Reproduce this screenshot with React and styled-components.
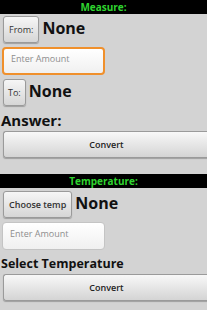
import React from "react";
import styled, { createGlobalStyle } from "styled-components";

const Global = createGlobalStyle`
  html, body {
    margin: 0;
    padding: 0;
    background: #d3d3d3;
    font-family: "Open Sans", "DejaVu Sans", sans-serif;
  }
`;

const Screen = styled.div`
  width: 207px;
  height: 310px;
  overflow: hidden;
  background: #d3d3d3;
  display: flex;
  flex-direction: column;
`;

const TitleBar = styled.div`
  height: 14px;
  background: #000;
  color: #2fd42f;
  font-weight: bold;
  font-size: 10px;
  line-height: 14px;
  text-align: center;
  margin-top: ${(p) => p.top || 0}px;
`;

const Row = styled.div`
  display: flex;
  align-items: center;
  gap: 3px;
  padding: 0 3px;
  margin-top: ${(p) => p.top || 0}px;
`;

const SmallButton = styled.button`
  height: 27px;
  padding: 0 ${(p) => p.pad || 5}px;
  font-family: inherit;
  font-size: ${(p) => p.size || 9}px;
  font-weight: ${(p) => (p.bold ? 600 : 400)};
  color: #333;
  border: 1px solid #9a9a9a;
  border-radius: 3px;
  background: linear-gradient(#f6f6f6, #d6d6d6);
  box-shadow: 0 1px 1px rgba(0, 0, 0, 0.25);
  cursor: pointer;
`;

const Value = styled.span`
  font-size: 16px;
  font-weight: bold;
  color: #111;
  margin-top: -4px;
`;

const Amount = styled.input`
  box-sizing: border-box;
  width: 103px;
  height: 28px;
  margin: ${(p) => p.top || 0}px 0 0 2px;
  padding: 0 7px 6px;
  font-family: inherit;
  font-size: 9px;
  color: #333;
  border: ${(p) => (p.focused ? "2px solid #f0902c" : "1px solid #c4c4c4")};
  border-radius: 4px;
  background: linear-gradient(#ffffff, #f0f0f0);
  outline: none;
  &::placeholder {
    color: #8d8d8d;
  }
`;

const Label = styled.div`
  font-size: ${(p) => p.size || 15}px;
  font-weight: bold;
  color: #111;
  padding-left: 1px;
  margin-top: ${(p) => p.top || 0}px;
  line-height: 16px;
`;

const WideButton = styled.button`
  box-sizing: border-box;
  width: 206px;
  height: 27px;
  margin: ${(p) => p.top || 0}px 0 0 3px;
  font-family: inherit;
  font-size: 9px;
  font-weight: 600;
  color: #222;
  border: 1px solid #9a9a9a;
  border-right: none;
  border-radius: 3px 0 0 3px;
  background: linear-gradient(#f8f8f8, #d4d4d4);
  box-shadow: 0 1px 1px rgba(0, 0, 0, 0.25);
`;

export default function App() {
  return (
    <Screen>
      <Global />
      <TitleBar>Measure:</TitleBar>
      <Row top={2}>
        <SmallButton>From:</SmallButton>
        <Value>None</Value>
      </Row>
      <Amount focused top={4} placeholder="Enter Amount" />
      <Row top={4}>
        <SmallButton pad={4}>To:</SmallButton>
        <Value>None</Value>
      </Row>
      <Label top={6}>Answer:</Label>
      <WideButton top={3}>Convert</WideButton>
      <TitleBar top={16}>Temperature:</TitleBar>
      <Row top={3}>
        <SmallButton bold size={9}>Choose temp</SmallButton>
        <Value>None</Value>
      </Row>
      <Amount top={4} placeholder="Enter Amount" />
      <Label size={12.5} top={6}>Select Temperature</Label>
      <WideButton top={2}>Convert</WideButton>
    </Screen>
  );
}
